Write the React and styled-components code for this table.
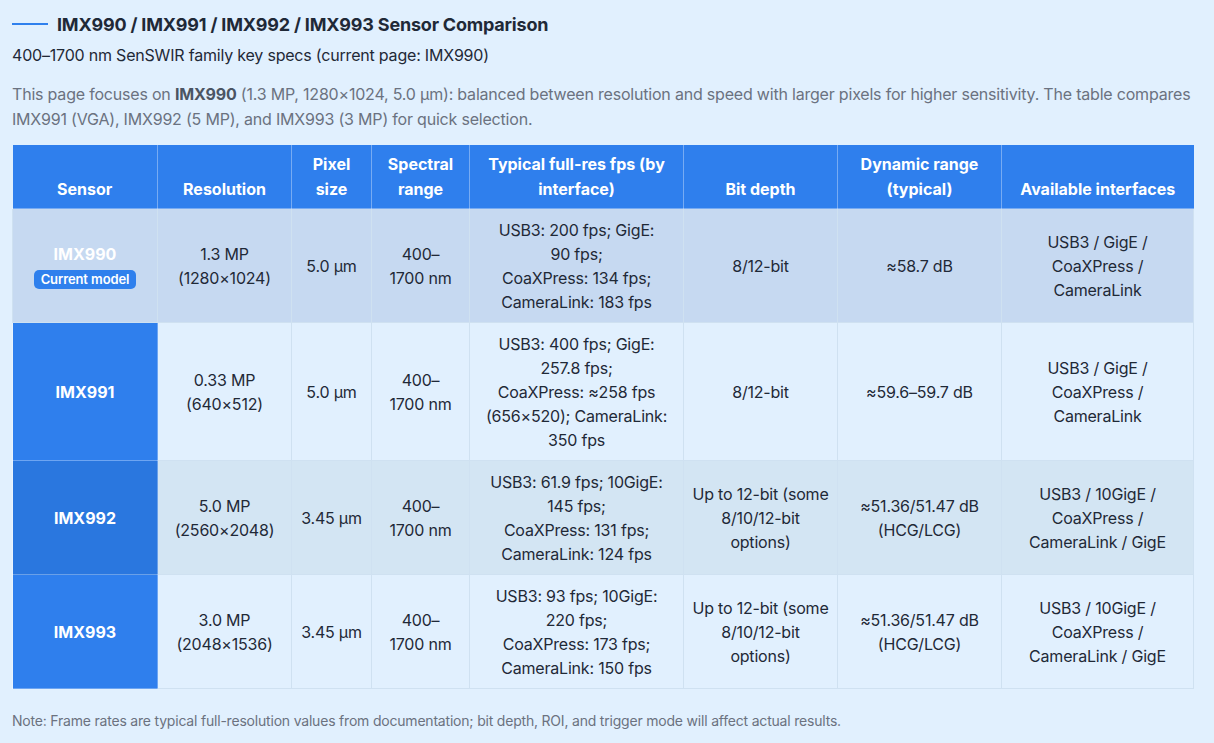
import { Fragment } from "react";
import styled, { createGlobalStyle } from "styled-components";

const GlobalStyle = createGlobalStyle`
  html, body {
    margin: 0;
    padding: 0;
    background: #e1f0fe;
  }

  body {
    font-family: Inter, "Noto Sans", "Liberation Sans", sans-serif;
    color: #1f2937;
    letter-spacing: -0.2px;
  }
`;

const ifaceBasic = ["USB3 / GigE /", "CoaXPress /", "CameraLink"];
const ifaceTen = ["USB3 / 10GigE /", "CoaXPress /", "CameraLink / GigE"];
const bitsWide = ["Up to 12-bit (some", "8/10/12-bit", "options)"];
const rangeHcg = ["≈51.36/51.47 dB", "(HCG/LCG)"];

const sensors = [
  {
    name: "IMX990",
    current: true,
    resolution: ["1.3 MP", "(1280×1024)"],
    pixel: ["5.0 µm"],
    fps: ["USB3: 200 fps; GigE:", "90 fps;", "CoaXPress: 134 fps;", "CameraLink: 183 fps"],
    bits: ["8/12-bit"],
    range: ["≈58.7 dB"],
    interfaces: ifaceBasic,
  },
  {
    name: "IMX991",
    resolution: ["0.33 MP", "(640×512)"],
    pixel: ["5.0 µm"],
    fps: [
      "USB3: 400 fps; GigE:",
      "257.8 fps;",
      "CoaXPress: ≈258 fps",
      "(656×520); CameraLink:",
      "350 fps",
    ],
    bits: ["8/12-bit"],
    range: ["≈59.6–59.7 dB"],
    interfaces: ifaceBasic,
  },
  {
    name: "IMX992",
    shaded: true,
    resolution: ["5.0 MP", "(2560×2048)"],
    pixel: ["3.45 µm"],
    fps: ["USB3: 61.9 fps; 10GigE:", "145 fps;", "CoaXPress: 131 fps;", "CameraLink: 124 fps"],
    bits: bitsWide,
    range: rangeHcg,
    interfaces: ifaceTen,
  },
  {
    name: "IMX993",
    resolution: ["3.0 MP", "(2048×1536)"],
    pixel: ["3.45 µm"],
    fps: ["USB3: 93 fps; 10GigE:", "220 fps;", "CoaXPress: 173 fps;", "CameraLink: 150 fps"],
    bits: bitsWide,
    range: rangeHcg,
    interfaces: ifaceTen,
  },
];

const columns = [
  { label: "Sensor", width: 145 },
  { label: "Resolution", width: 134 },
  { label: "Pixel size", width: 80 },
  { label: "Spectral range", width: 98 },
  { label: "Typical full-res fps (by interface)", width: 214 },
  { label: "Bit depth", width: 154 },
  { label: "Dynamic range (typical)", width: 164 },
  { label: "Available interfaces", width: 192 },
];

const Lines = ({ lines }) =>
  lines.map((line, i) => (
    <Fragment key={i}>
      {i > 0 && <br />}
      {line}
    </Fragment>
  ));

const App = () => {
  return (
    <Page>
      <GlobalStyle />
      <TitleRow>
        <TitleRule />
        <Title>IMX990 / IMX991 / IMX992 / IMX993 Sensor Comparison</Title>
      </TitleRow>
      <Subtitle>400–1700 nm SenSWIR family key specs (current page: IMX990)</Subtitle>
      <Intro>
        This page focuses on <strong>IMX990</strong> (1.3 MP, 1280×1024, 5.0 µm): balanced
        between resolution and speed with larger pixels for higher sensitivity. The table
        compares IMX991 (VGA), IMX992 (5 MP), and IMX993 (3 MP) for quick selection.
      </Intro>

      <Table>
        <colgroup>
          {columns.map((c) => (
            <col key={c.label} style={{ width: c.width }} />
          ))}
        </colgroup>
        <thead>
          <tr>
            {columns.map((c) => (
              <HeadCell key={c.label}>{c.label}</HeadCell>
            ))}
          </tr>
        </thead>
        <tbody>
          {sensors.map((s) => {
            const tone = s.current ? "current" : s.shaded ? "shaded" : "plain";
            return (
              <Row key={s.name} $tone={tone}>
                <SensorCell $tone={tone}>
                  <SensorName>{s.name}</SensorName>
                  {s.current && <Badge>Current model</Badge>}
                </SensorCell>
                <Cell>
                  <Lines lines={s.resolution} />
                </Cell>
                <Cell>
                  <Lines lines={s.pixel} />
                </Cell>
                <Cell>
                  <Lines lines={["400–", "1700 nm"]} />
                </Cell>
                <Cell>
                  <Lines lines={s.fps} />
                </Cell>
                <Cell>
                  <Lines lines={s.bits} />
                </Cell>
                <Cell>
                  <Lines lines={s.range} />
                </Cell>
                <Cell>
                  <Lines lines={s.interfaces} />
                </Cell>
              </Row>
            );
          })}
        </tbody>
      </Table>

      <Note>
        Note: Frame rates are typical full-resolution values from documentation; bit depth,
        ROI, and trigger mode will affect actual results.
      </Note>
    </Page>
  );
};

const Page = styled.div`
  min-height: 743px;
  box-sizing: border-box;
  padding: 11px 21px 12px 12px;
  background: #e1f0fe;
`;

const TitleRow = styled.div`
  display: flex;
  align-items: center;
  gap: 9px;
  height: 26px;
`;

const TitleRule = styled.span`
  width: 36px;
  height: 2px;
  background: #2f80ed;
  flex-shrink: 0;
`;

const Title = styled.h2`
  margin: 0;
  font-size: 18px;
  font-weight: 700;
  color: #1f2937;
`;

const Subtitle = styled.p`
  margin: 6px 0 0;
  font-size: 16px;
  line-height: 24px;
  color: #1f2937;
`;

const Intro = styled.p`
  margin: 15px 0 0;
  font-size: 16px;
  line-height: 25px;
  color: #6b7280;

  strong {
    color: #4b5563;
    font-weight: 700;
  }
`;

const Table = styled.table`
  margin-top: 13px;
  width: 1181px;
  table-layout: fixed;
  border-collapse: collapse;
  font-size: 16px;
  line-height: 24px;
`;

const HeadCell = styled.th`
  background: #2f7fed;
  color: #ffffff;
  font-weight: 700;
  letter-spacing: 0;
  line-height: 24.5px;
  padding: 7px 8px;
  vertical-align: bottom;
  text-align: center;
  border: 1px solid rgba(255, 255, 255, 0.35);
  border-top: none;

  &:first-child {
    border-left: none;
  }

  &:last-child {
    border-right: none;
  }
`;

const rowBg = {
  current: "#c6d9f1",
  plain: "#e1f0fe",
  shaded: "#d3e5f3",
};

const Row = styled.tr`
  background: ${({ $tone }) => rowBg[$tone]};
`;

const Cell = styled.td`
  padding: 8.5px 6px;
  text-align: center;
  vertical-align: middle;
  white-space: nowrap;
  color: #1f2937;
  border: 1px solid #cfe1f1;
`;

const sensorBg = {
  current: "transparent",
  plain: "#2f7fed",
  shaded: "#2a77df",
};

const SensorCell = styled(Cell)`
  background: ${({ $tone }) => sensorBg[$tone]};
  color: #ffffff;
  font-weight: 700;
  letter-spacing: 0;
  border-color: ${({ $tone }) =>
    $tone === "current" ? "#cfe1f1" : "rgba(255, 255, 255, 0.3)"};
`;

const SensorName = styled.div`
  line-height: 24px;
`;

const Badge = styled.span`
  display: inline-block;
  padding: 0 7px;
  height: 19px;
  line-height: 19px;
  border-radius: 5px;
  background: #2f80ed;
  color: #ffffff;
  font-size: 13px;
  font-weight: 600;
  letter-spacing: -0.1px;
`;

const Note = styled.p`
  margin: 22px 0 0;
  font-size: 14px;
  line-height: 20px;
  color: #6b7280;
`;

export default App;
